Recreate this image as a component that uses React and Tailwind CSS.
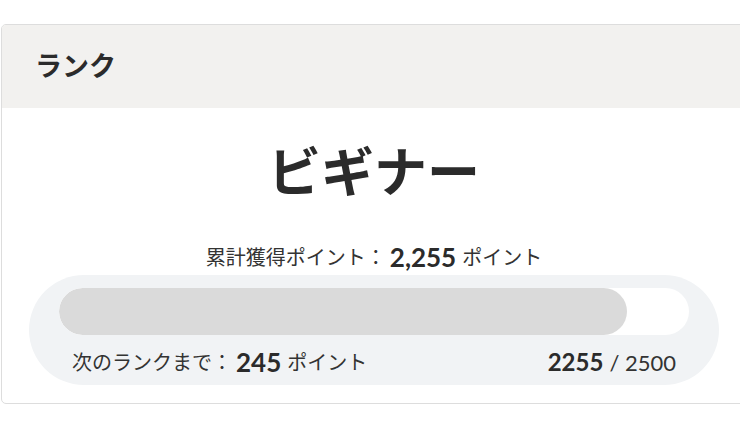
export default function App() {
  const font = { fontFamily: 'Lato, "Noto Sans CJK JP", sans-serif' };
  const pct = (2255 / 2500) * 100;
  return (
    <div className="w-[740px] h-[435px] overflow-hidden bg-white pt-[24px] text-[#333333]" style={font}>
      <div className="ml-px w-[746px] border border-[#dddddd] rounded-[5px] overflow-hidden bg-white">
        <div className="h-[83px] bg-[#f2f1ef] flex items-center pl-[33px] text-[27px] font-bold text-[#2b2b2b]">
          ランク
        </div>
        <div className="px-[27px] pb-[18px]">
          <div className="mt-[38px] text-center text-[53px] font-bold leading-[52px] text-[#2b2b2b]">ビギナー</div>
          <div className="mt-[44px] h-[30px] flex items-center justify-center text-[20px]">
            <span>累計獲得ポイント：</span>
            <span className="ml-[4px] text-[26px] font-bold text-[#2b2b2b]">2,255</span>
            <span className="ml-[6px]">ポイント</span>
          </div>
          <div className="mt-[3px] h-[110px] rounded-full bg-[#f1f3f5] pt-[13px] px-[30px]">
            <div className="h-[47px] rounded-full bg-white overflow-hidden">
              <div className="h-full rounded-full bg-[#dadada]" style={{ width: `${pct}%` }} />
            </div>
            <div className="mt-[12px] h-[30px] flex items-center justify-between px-[13px] text-[20px]">
              <div className="flex items-center">
                <span>次のランクまで：</span>
                <span className="ml-[4px] text-[26px] font-bold text-[#2b2b2b]">245</span>
                <span className="ml-[6px]">ポイント</span>
              </div>
              <div className="flex items-center">
                <span className="text-[24px] font-bold text-[#2b2b2b]">2255</span>
                <span className="ml-[6px] text-[22px]">/ 2500</span>
              </div>
            </div>
          </div>
        </div>
      </div>
    </div>
  );
}
